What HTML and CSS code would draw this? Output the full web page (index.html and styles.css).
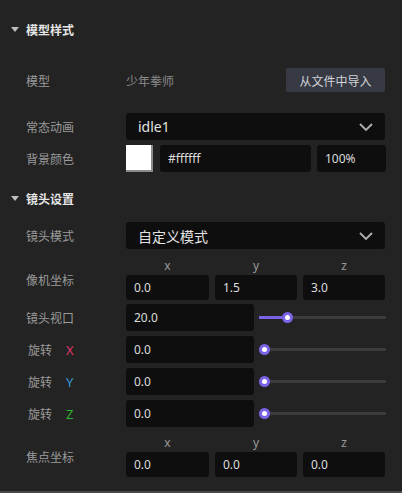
FILE: index.html
```html
<!DOCTYPE html>
<html lang="zh">
<head>
<meta charset="utf-8">
<link rel="stylesheet" href="styles.css">
</head>
<body>
<div class="panel">
  <div class="section-head h1"><span class="tri"></span><span>模型样式</span></div>

  <div class="row r-model">
    <div class="label">模型</div>
    <div class="content between">
      <span class="value">少年拳师</span>
      <button class="btn">从文件中导入</button>
    </div>
  </div>

  <div class="row r-anim">
    <div class="label">常态动画</div>
    <div class="content">
      <div class="select"><span>idle1</span>
        <svg class="chev" width="14" height="8" viewBox="0 0 14 8"><path d="M1 1 L7 7 L13 1" fill="none" stroke="#b0b0b0" stroke-width="1.8"/></svg>
      </div>
    </div>
  </div>

  <div class="row r-bg">
    <div class="label">背景颜色</div>
    <div class="content color-row">
      <div class="swatch"></div>
      <div class="input hex">#ffffff</div>
      <div class="input pct">100%</div>
    </div>
  </div>

  <div class="section-head h2"><span class="tri"></span><span>镜头设置</span></div>

  <div class="row r-mode">
    <div class="label">镜头模式</div>
    <div class="content">
      <div class="select"><span>自定义模式</span>
        <svg class="chev" width="14" height="8" viewBox="0 0 14 8"><path d="M1 1 L7 7 L13 1" fill="none" stroke="#b0b0b0" stroke-width="1.8"/></svg>
      </div>
    </div>
  </div>

  <div class="row r-cam">
    <div class="label">像机坐标</div>
    <div class="content xyz">
      <div class="axis">x</div><div class="axis">y</div><div class="axis">z</div>
      <div class="input small">0.0</div><div class="input small">1.5</div><div class="input small">3.0</div>
    </div>
  </div>

  <div class="row r-fov">
    <div class="label">镜头视口</div>
    <div class="content slider-row">
      <div class="input num">20.0</div>
      <div class="slider"><div class="track"></div><div class="fill" style="width:28px"></div><div class="knob" style="left:23px"></div></div>
    </div>
  </div>

  <div class="row r-rot">
    <div class="label rot">旋转<span class="ax ax-x">X</span></div>
    <div class="content slider-row">
      <div class="input num">0.0</div>
      <div class="slider"><div class="track"></div><div class="knob" style="left:0px"></div></div>
    </div>
  </div>

  <div class="row r-rot">
    <div class="label rot">旋转<span class="ax ax-y">Y</span></div>
    <div class="content slider-row">
      <div class="input num">0.0</div>
      <div class="slider"><div class="track"></div><div class="knob" style="left:0px"></div></div>
    </div>
  </div>

  <div class="row r-rot">
    <div class="label rot">旋转<span class="ax ax-z">Z</span></div>
    <div class="content slider-row">
      <div class="input num">0.0</div>
      <div class="slider"><div class="track"></div><div class="knob" style="left:0px"></div></div>
    </div>
  </div>

  <div class="row r-focus">
    <div class="label">焦点坐标</div>
    <div class="content xyz">
      <div class="axis">x</div><div class="axis">y</div><div class="axis">z</div>
      <div class="input small">0.0</div><div class="input small">0.0</div><div class="input small">0.0</div>
    </div>
  </div>
</div>
<div class="bottom-line"></div>
</body>
</html>
```

FILE: styles.css
```css
html, body {
  margin: 0;
  padding: 0;
  background: #232323;
  height: 493px;
  overflow: hidden;
}
body {
  font-family: "Noto Sans", "Noto Sans CJK SC", sans-serif;
  font-size: 12px;
  color: #9a9a9a;
}
.panel {
  display: flex;
  flex-direction: column;
  padding: 0 16px 0 26px;
  height: 491px;
}
.section-head {
  display: flex;
  align-items: center;
  height: 20px;
  color: #e6e6e6;
  font-weight: bold;
  font-family: "Noto Sans CJK SC", sans-serif;
  font-size: 12px;
}
.section-head .tri {
  width: 0;
  height: 0;
  border-left: 4px solid transparent;
  border-right: 4px solid transparent;
  border-top: 5px solid #bdbdbd;
  margin-left: -15px;
  margin-right: 7px;
}
.h1 { margin-top: 19px; }
.h2 { margin-top: 16px; }

.row {
  display: flex;
  align-items: center;
}
.label {
  width: 100px;
  flex: none;
  font-family: "Noto Sans CJK SC", sans-serif;
  font-size: 12px;
  color: #9a9a9a;
}
.label.rot { padding-left: 2px; width: 98px; }
.ax {
  margin-left: 14px;
  font-family: "Noto Sans", sans-serif;
  font-size: 13px;
}
.ax-x { color: #e0336d; }
.ax-y { color: #3a95dc; }
.ax-z { color: #2fb52f; }
.content {
  flex: 1;
  min-width: 0;
}
.between {
  display: flex;
  justify-content: space-between;
  align-items: center;
}
.value {
  color: #8a8a8a;
  font-family: "Noto Sans CJK SC", sans-serif;
}
.btn {
  width: 99px;
  height: 24px;
  background: #373a43;
  color: #d0d4dc;
  border: none;
  border-radius: 2px;
  font-family: "Noto Sans CJK SC", sans-serif;
  font-size: 12px;
  padding: 0;
  margin-right: 1px;
}
.r-model { margin-top: 29px; height: 24px; }
.r-anim { margin-top: 21px; height: 27px; }
.r-bg { margin-top: 5px; height: 27px; }
.r-mode { margin-top: 14px; height: 27px; }
.r-cam { margin-top: 10px; }
.r-fov { margin-top: 4px; height: 27px; }
.r-rot { margin-top: 5px; height: 27px; }
.r-focus { margin-top: 9px; }

.select {
  height: 27px;
  background: #0e0e0e;
  border-radius: 3px;
  display: flex;
  align-items: center;
  justify-content: space-between;
  padding: 0 12px 0 12px;
  color: #e2e2e2;
  font-family: "Noto Sans", "Noto Sans CJK SC", sans-serif;
  font-size: 14px;
  margin-right: 1px;
}
.chev { margin-top: 1px; }

.input {
  background: #0e0e0e;
  border-radius: 3px;
  color: #dcdcdc;
  font-family: "Noto Sans", sans-serif;
  font-size: 12px;
  display: flex;
  align-items: center;
  padding-left: 8px;
  box-sizing: border-box;
}
.color-row {
  display: flex;
  align-items: stretch;
  height: 27px;
}
.swatch {
  width: 27px;
  background: #ffffff;
  box-sizing: border-box;
  border-right: 2px solid #8c8c8c;
  border-bottom: 2px solid #8c8c8c;
  margin-right: 7px;
}
.hex { width: 151px; margin-right: 6px; }
.pct { width: 69px; padding-left: 8px; }

.xyz {
  display: grid;
  grid-template-columns: 83px 82px 82px;
  column-gap: 6px;
  row-gap: 2px;
}
.axis {
  height: 14px;
  line-height: 14px;
  text-align: center;
  color: #9a9a9a;
  font-family: "Noto Sans", sans-serif;
  font-size: 12px;
}
.input.small { height: 25px; }

.slider-row {
  display: flex;
  align-items: center;
  height: 27px;
}
.input.num {
  width: 128px;
  height: 27px;
  flex: none;
}
.slider {
  position: relative;
  margin-left: 5px;
  width: 128px;
  height: 12px;
}
.track {
  position: absolute;
  left: 0;
  right: 0;
  top: 4px;
  height: 3px;
  background: #3d3d3d;
  border-radius: 1px;
}
.fill {
  position: absolute;
  left: 0;
  top: 4px;
  height: 3px;
  background: #7b62e6;
}
.knob {
  position: absolute;
  top: 0;
  width: 11px;
  height: 11px;
  border-radius: 50%;
  background: #ffffff;
  box-sizing: border-box;
  border: 3px solid #7b62e6;
}
.bottom-line {
  height: 2px;
  background: #4a4a4a;
}
```
